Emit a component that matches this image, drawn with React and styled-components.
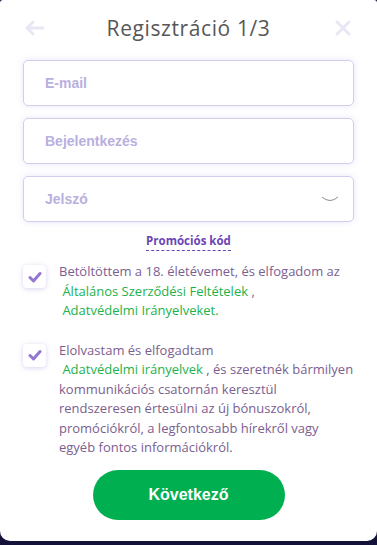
import React from "react";
import styled, { createGlobalStyle } from "styled-components";

const Global = createGlobalStyle`
  html, body { margin: 0; padding: 0; background: #15123a; }
  body { font-family: "Open Sans", "Noto Sans", sans-serif; }
  * { box-sizing: border-box; }
`;

const Card = styled.div`
  width: 377px;
  height: 541px;
  background: #fff;
  border-radius: 3px 3px 10px 10px;
  padding: 0 23px;
  display: flex;
  flex-direction: column;
`;

const Header = styled.div`
  height: 60px;
  display: flex;
  align-items: center;
  justify-content: space-between;
  padding-bottom: 4px;
`;

const Title = styled.h1`
  margin: 0;
  font-family: "Open Sans", sans-serif;
  font-weight: 400;
  font-size: 21px;
  color: #575757;
  letter-spacing: 0.6px;
`;

const IconBtn = styled.span`
  width: 22px;
  height: 22px;
  display: flex;
  align-items: center;
  justify-content: center;
`;

const Fields = styled.div`
  display: flex;
  flex-direction: column;
  gap: 12px;
`;

const Field = styled.div`
  height: 46px;
  border: 1px solid #d6cdee;
  border-radius: 5px;
  box-shadow: 0 0 6px rgba(170, 150, 230, 0.25);
  display: flex;
  align-items: center;
  justify-content: space-between;
  padding: 0 14px 0 21px;
`;

const Placeholder = styled.span`
  font-family: "Liberation Sans", Arial, sans-serif;
  font-weight: 700;
  font-size: 14px;
  color: #b9afe0;
`;

const PromoRow = styled.div`
  display: flex;
  justify-content: center;
  margin-top: 11px;
`;

const Promo = styled.span`
  font-family: "Open Sans", sans-serif;
  font-weight: 700;
  font-size: 11.5px;
  color: #6b44b6;
  padding-bottom: 2px;
  border-bottom: 1px dashed #6b44b6;
`;

const CheckRow = styled.div`
  display: flex;
  gap: 13px;
  margin-top: ${(p) => p.$mt}px;
`;

const Box = styled.span`
  flex: none;
  width: 23px;
  height: 23px;
  border-radius: 4px;
  background: #fff;
  box-shadow: 0 1px 5px rgba(150, 120, 210, 0.35);
  display: flex;
  align-items: center;
  justify-content: center;
  margin-top: 3px;
`;

const Text = styled.p`
  margin: 0;
  font-family: "Open Sans", sans-serif;
  font-size: 13px;
  line-height: 19.5px;
  color: #7b5e90;
  white-space: nowrap;
`;

const Link = styled.span`
  color: #1db24b;
`;

const ButtonRow = styled.div`
  display: flex;
  justify-content: center;
  margin-top: 12px;
`;

const Button = styled.button`
  width: 192px;
  height: 50px;
  border: none;
  border-radius: 25px;
  background: #00b050;
  color: #fff;
  font-family: "Liberation Sans", Arial, sans-serif;
  font-weight: 700;
  font-size: 16px;
`;

const Check = () => (
  <svg width="14" height="12" viewBox="0 0 14 12">
    <path d="M2 6.5 L5.5 10 L12 2.5" fill="none" stroke="#9478cf" strokeWidth="3" strokeLinecap="round" strokeLinejoin="round" />
  </svg>
);

export default function App() {
  return (
    <>
      <Global />
      <Card>
        <Header>
          <IconBtn>
            <svg width="20" height="16" viewBox="0 0 20 16">
              <path d="M19 8 H3 M9 2 L3 8 L9 14" fill="none" stroke="#e9e7f5" strokeWidth="3" strokeLinecap="round" strokeLinejoin="round" />
            </svg>
          </IconBtn>
          <Title>Regisztráció 1/3</Title>
          <IconBtn>
            <svg width="16" height="16" viewBox="0 0 16 16">
              <path d="M2 2 L14 14 M14 2 L2 14" fill="none" stroke="#e9e7f5" strokeWidth="3" strokeLinecap="round" />
            </svg>
          </IconBtn>
        </Header>
        <Fields>
          <Field><Placeholder>E-mail</Placeholder></Field>
          <Field><Placeholder>Bejelentkezés</Placeholder></Field>
          <Field>
            <Placeholder>Jelszó</Placeholder>
            <svg width="18" height="6" viewBox="0 0 18 6">
              <path d="M1 1 Q9 8 17 1" fill="none" stroke="#8d8d8d" strokeWidth="1" />
            </svg>
          </Field>
        </Fields>
        <PromoRow><Promo>Promóciós kód</Promo></PromoRow>
        <CheckRow $mt={11}>
          <Box><Check /></Box>
          <Text>
            Betöltöttem a 18. életévemet, és elfogadom az <br />
            <Link>&nbsp;Általános Szerződési Feltételek</Link> , <br />
            <Link>&nbsp;Adatvédelmi Irányelveket.</Link>
          </Text>
        </CheckRow>
        <CheckRow $mt={20}>
          <Box><Check /></Box>
          <Text>
            Elolvastam és elfogadtam <br />
            <Link>&nbsp;Adatvédelmi irányelvek</Link> , és szeretnék bármilyen<br />
            kommunikációs csatornán keresztül<br />
            rendszeresen értesülni az új bónuszokról,<br />
            promóciókról, a legfontosabb hírekről vagy<br />
            egyéb fontos információkról.
          </Text>
        </CheckRow>
        <ButtonRow><Button>Következő</Button></ButtonRow>
      </Card>
    </>
  );
}
